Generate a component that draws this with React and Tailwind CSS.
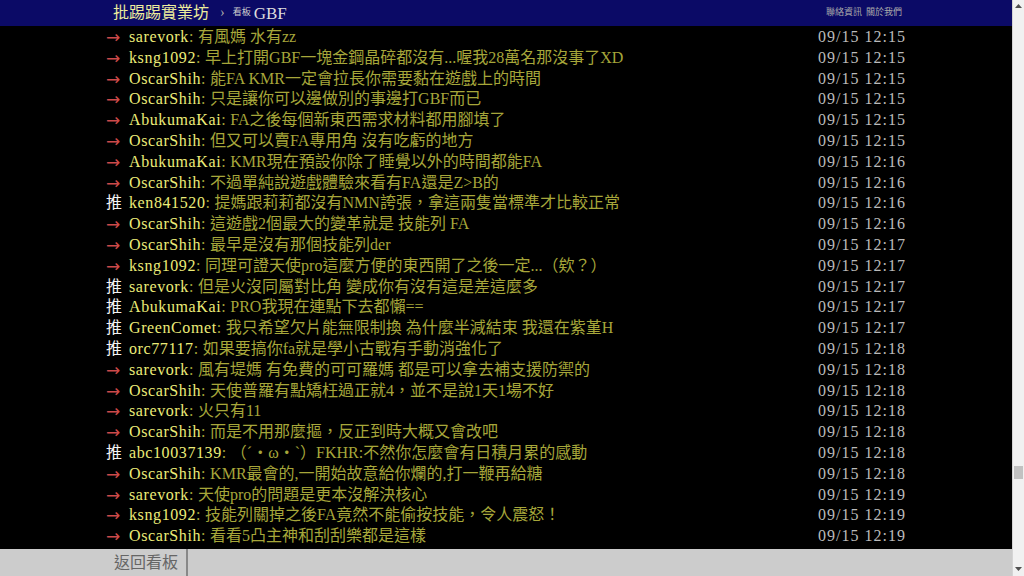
import React from 'react'

const pushes = [
  ['→', 'sarevork', '有風媽 水有zz', '09/15 12:15'],
  ['→', 'ksng1092', '早上打開GBF一塊金鋼晶碎都沒有...喔我28萬名那沒事了XD', '09/15 12:15'],
  ['→', 'OscarShih', '能FA KMR一定會拉長你需要黏在遊戲上的時間', '09/15 12:15'],
  ['→', 'OscarShih', '只是讓你可以邊做別的事邊打GBF而已', '09/15 12:15'],
  ['→', 'AbukumaKai', 'FA之後每個新東西需求材料都用腳填了', '09/15 12:15'],
  ['→', 'OscarShih', '但又可以賣FA專用角 沒有吃虧的地方', '09/15 12:15'],
  ['→', 'AbukumaKai', 'KMR現在預設你除了睡覺以外的時間都能FA', '09/15 12:16'],
  ['→', 'OscarShih', '不過單純說遊戲體驗來看有FA還是Z>B的', '09/15 12:16'],
  ['推', 'ken841520', '提媽跟莉莉都沒有NMN誇張，拿這兩隻當標準才比較正常', '09/15 12:16'],
  ['→', 'OscarShih', '這遊戲2個最大的變革就是 技能列 FA', '09/15 12:16'],
  ['→', 'OscarShih', '最早是沒有那個技能列der', '09/15 12:17'],
  ['→', 'ksng1092', '同理可證天使pro這麼方便的東西開了之後一定...（欸？）', '09/15 12:17'],
  ['推', 'sarevork', '但是火沒同屬對比角 變成你有沒有這是差這麼多', '09/15 12:17'],
  ['推', 'AbukumaKai', 'PRO我現在連點下去都懶==', '09/15 12:17'],
  ['推', 'GreenComet', '我只希望欠片能無限制換 為什麼半減結束 我還在紫堇H', '09/15 12:17'],
  ['推', 'orc77117', '如果要搞你fa就是學小古戰有手動消強化了', '09/15 12:18'],
  ['→', 'sarevork', '風有堤媽 有免費的可可羅媽 都是可以拿去補支援防禦的', '09/15 12:18'],
  ['→', 'OscarShih', '天使普羅有點矯枉過正就4，並不是說1天1場不好', '09/15 12:18'],
  ['→', 'sarevork', '火只有11', '09/15 12:18'],
  ['→', 'OscarShih', '而是不用那麼摳，反正到時大概又會改吧', '09/15 12:18'],
  ['推', 'abc10037139', '（ˊ・ω・ˋ）FKHR:不然你怎麼會有日積月累的感動', '09/15 12:18'],
  ['→', 'OscarShih', 'KMR最會的,一開始故意給你爛的,打一鞭再給糖', '09/15 12:18'],
  ['→', 'sarevork', '天使pro的問題是更本沒解決核心', '09/15 12:19'],
  ['→', 'ksng1092', '技能列關掉之後FA竟然不能偷按技能，令人震怒！', '09/15 12:19'],
  ['→', 'OscarShih', '看看5凸主神和刮刮樂都是這樣', '09/15 12:19'],
]

function PushRow({ tag, user, content, time }) {
  const isPush = tag === '推'
  return (
    <div className="flex h-[20.8px] items-center justify-between whitespace-nowrap text-[16px] leading-[20.8px]">
      <div className="flex items-center">
        <span
          className={
            isPush
              ? 'w-[23px] shrink-0 text-[#f4f4f4]'
              : 'w-[23px] shrink-0 text-[17px] text-[#cc4a4a] [font-family:"DejaVu_Sans",sans-serif]'
          }
        >
          {tag}
        </span>
        <span className="tracking-[0.6px] text-[#ecec78]">{user}</span>
        <span className="text-[#a6a63a]">
          <span className="tracking-[0.6px]">:</span> {content}
        </span>
      </div>
      <span className="tracking-[1px] text-[#bbbbbb]">{time}</span>
    </div>
  )
}

export default function App() {
  return (
    <div
      className="flex h-[576px] w-[1024px] overflow-hidden bg-black"
      style={{ fontFamily: '"Liberation Serif", "Noto Sans CJK TC", serif' }}
    >
      <div className="flex h-full w-[1012px] flex-col">
        {/* top bar */}
        <div className="h-[26px] shrink-0 bg-[#0b0a66]">
          <div className="mx-auto flex h-full w-[800px] items-center justify-between pl-[7px] pr-[4px]">
            <div className="flex items-center">
              <span className="text-[16px] leading-none text-[#ecec9c]">批踢踢實業坊</span>
              <span className="ml-[11px] text-[14px] leading-none text-[#aaaaaa]">›</span>
              <span className="ml-[8px] text-[9px] text-[#cccccc]">看板</span>
              <span className="ml-[3px] text-[17px] leading-none text-[#dddddd]">GBF</span>
            </div>
            <div className="flex gap-[4px] text-[9px] text-[#aaaaaa]">
              <span>聯絡資訊</span>
              <span>關於我們</span>
            </div>
          </div>
        </div>

        {/* pushes */}
        <div className="flex-1 overflow-hidden pt-[1px]">
          <div className="mx-auto w-[800px]">
            {pushes.map((p, i) => (
              <PushRow key={i} tag={p[0]} user={p[1]} content={p[2]} time={p[3]} />
            ))}
          </div>
        </div>

        {/* footer */}
        <div className="h-[27px] shrink-0 bg-[#cccccc]">
          <div className="flex h-full pl-[114px]">
            <span className="flex h-full items-center border-r-2 border-[#888888] pr-[8px] text-[16px] text-[#666666]">
              返回看板
            </span>
          </div>
        </div>
      </div>

      {/* scrollbar */}
      <div className="relative flex h-full w-[12px] flex-col items-center border-l border-[#d4d4d4] bg-[#f1f1f1]">
        <svg className="mt-[4px]" width="7" height="4" viewBox="0 0 7 4">
          <path d="M3.5 0 L7 4 L0 4 Z" fill="#505050" />
        </svg>
        <div className="absolute left-[1px] top-[466px] h-[13px] w-[9px] bg-[#c1c1c1]" />
        <svg className="mt-auto mb-[5px]" width="7" height="4" viewBox="0 0 7 4">
          <path d="M0 0 L7 0 L3.5 4 Z" fill="#505050" />
        </svg>
      </div>
    </div>
  )
}
